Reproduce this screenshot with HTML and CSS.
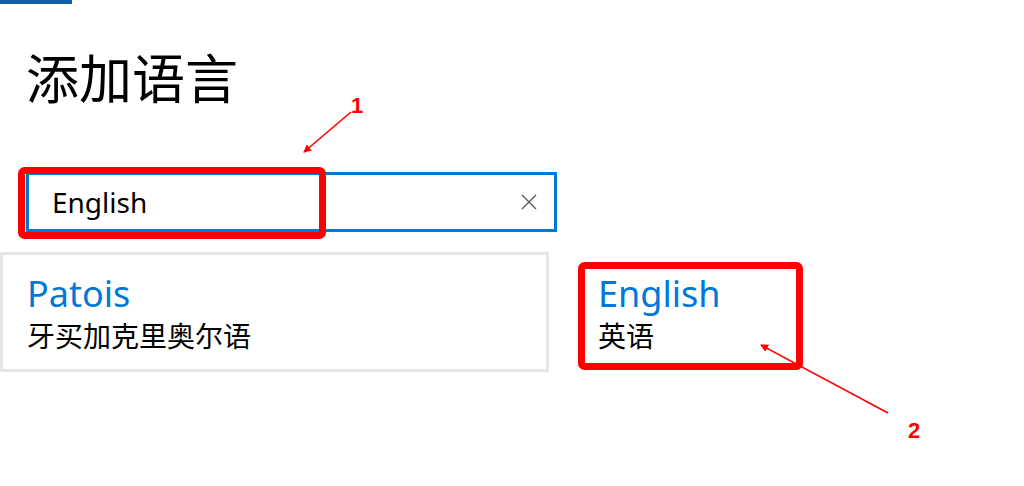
FILE: index.html
```html
<!DOCTYPE html>
<html lang="zh-CN">
<head>
<meta charset="utf-8">
<title>添加语言</title>
<link rel="stylesheet" href="styles.css">
</head>
<body>
<div class="accent"></div>
<main class="page">
  <h1 class="title">添加语言</h1>
  <div class="search">
    <span class="search-text">English</span>
    <svg class="clear" width="16" height="16" viewBox="0 0 16 16"><path d="M1 1L15 15M15 1L1 15" stroke="#5a5a5a" stroke-width="1.4" fill="none"/></svg>
  </div>
  <div class="results">
    <div class="card card-bordered">
      <div class="lang-name">Patois</div>
      <div class="lang-local">牙买加克里奥尔语</div>
    </div>
    <div class="card card-plain">
      <div class="lang-name">English</div>
      <div class="lang-local">英语</div>
    </div>
  </div>
</main>
<svg class="annot" width="1024" height="486" viewBox="0 0 1024 486">
  <defs>
    <marker id="ah" markerWidth="8" markerHeight="8" refX="7" refY="4" orient="auto" markerUnits="userSpaceOnUse">
      <path d="M0 0L8 4L0 8Z" fill="#ff0000"/>
    </marker>
  </defs>
  <rect x="21.5" y="170.5" width="301" height="65" rx="3" fill="none" stroke="#ff0000" stroke-width="7"/>
  <rect x="581.5" y="265.5" width="218" height="101" rx="3" fill="none" stroke="#ff0000" stroke-width="7"/>
  <line x1="351" y1="112" x2="304" y2="152" stroke="#ff0000" stroke-width="1.6" marker-end="url(#ah)"/>
  <line x1="888" y1="413" x2="761" y2="345" stroke="#ff0000" stroke-width="1.6" marker-end="url(#ah)"/>
  <text x="351" y="113" class="num">1</text>
  <text x="908" y="438" class="num">2</text>
</svg>
</body>
</html>
```
FILE: styles.css
```css
html, body {
  margin: 0;
  padding: 0;
  background: #ffffff;
  width: 1024px;
  height: 486px;
  overflow: hidden;
}
body {
  font-family: "Noto Sans", "Noto Sans CJK SC", sans-serif;
  color: #000;
  position: relative;
}
.accent {
  width: 72px;
  height: 4px;
  background: #0f5fa8;
}
.page {
  display: flex;
  flex-direction: column;
}
.title {
  margin: 41px 0 0 26px;
  font-family: "Noto Sans CJK SC", sans-serif;
  font-weight: 400;
  font-size: 53px;
  line-height: 62px;
}
.search {
  margin: 65px 0 0 26px;
  height: 54px;
  border: 3px solid #0078d7;
  display: flex;
  align-items: center;
  justify-content: space-between;
  padding: 0 17px 0 23px;
  box-sizing: content-box;
  width: 485px;
}
.search-text {
  font-size: 28px;
  line-height: 1;
}
.clear {
  display: block;
  width: 16px;
  height: 16px;
}
.results {
  margin-top: 20px;
  display: grid;
  grid-template-columns: 549px 400px;
  column-gap: 24px;
}
.card {
  box-sizing: border-box;
  height: 120px;
  padding: 16px 24px 0 24px;
}
.card-bordered {
  border: 3px solid #e6e6e6;
}
.card-plain {
  padding-top: 19px;
  padding-left: 25px;
}
.lang-name {
  color: #0078d7;
  font-size: 36px;
  line-height: 46px;
}
.lang-local {
  font-family: "Noto Sans CJK SC", sans-serif;
  font-size: 28px;
  line-height: 36px;
}
.annot {
  position: absolute;
  left: 0;
  top: 0;
  pointer-events: none;
}
.num {
  fill: #ff0000;
  font-family: "Liberation Sans", sans-serif;
  font-weight: 700;
  font-size: 22px;
}
```
